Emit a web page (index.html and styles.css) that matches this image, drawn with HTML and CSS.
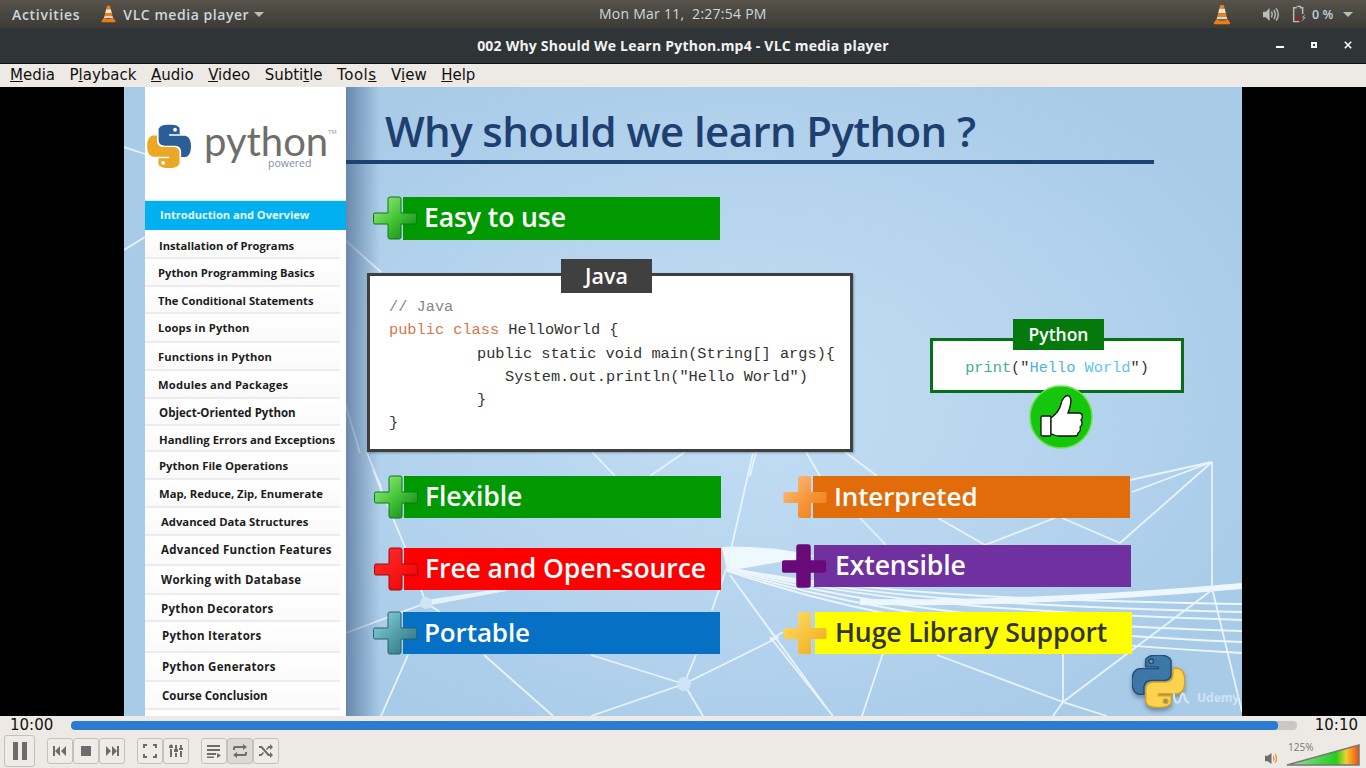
FILE: index.html
```html
<!DOCTYPE html>
<html lang="en">
<head>
	<meta charset="UTF-8">
	<title>002 Why Should We Learn Python.mp4 - VLC media player</title>
	<link rel="stylesheet" href="styles.css">
</head>
<body>
	<svg class="defs" width="0" height="0">
		<defs>
			<symbol id="py-blue" viewBox="0 0 111 111"><path d="M54.9 0C26.8 0 28.5 12.2 28.5 12.2l.03 12.6h26.8v3.8H17.9S0 26.6 0 54.9s15.6 27.3 15.6 27.3h9.3V69.1s-.5-15.6 15.4-15.6h26.5s14.9.2 14.9-14.4V14.9S84 0 54.9 0zm-14.7 8.5a4.8 4.8 0 1 1 0 9.6 4.8 4.8 0 0 1 0-9.6z"/></symbol>
			<symbol id="py-yellow" viewBox="0 0 111 111"><path d="M55.7 110c28.1 0 26.4-12.2 26.4-12.2l-.03-12.6H55.3v-3.8h37.4s17.9 2 17.9-26.3-15.6-27.3-15.6-27.3h-9.3v13.1s.5 15.6-15.4 15.6H43.8s-14.9-.2-14.9 14.4v24.2S26.6 110 55.7 110zm14.7-8.5a4.8 4.8 0 1 1 0-9.6 4.8 4.8 0 0 1 0 9.6z"/></symbol>
			<symbol id="plus" viewBox="0 0 44 44"><path d="M17 1h9a2 2 0 0 1 2 2v14h14a1.500 1.500 0 0 1 1.500 1.500v8a1.500 1.500 0 0 1-1.500 1.500H28v13a2 2 0 0 1-2 2h-9a2 2 0 0 1-2-2V28H2a1.500 1.500 0 0 1-1.500-1.500v-8A1.500 1.500 0 0 1 2 17h13V3a2 2 0 0 1 2-2z"/></symbol>
			<symbol id="cone" viewBox="0 0 20 24"><path fill="#f07f10" d="M8 1h4l1.200 4.500H6.800z"/><path fill="#e8e4dc" d="M6.800 5.500h6.400l1.200 5H5.600z"/><path fill="#f07f10" d="M5.600 10.500h8.800l1 4H4.600z"/><path fill="#d9d4ca" d="M4.600 14.500h10.800l.8 3H3.800z"/><path fill="#ef7d0e" d="M3.800 17l-3 4.200c-.5 1 0 1.800 1 1.800h16.400c1 0 1.500-.8 1-1.800l-3-4.200c-2 2.500-10.400 2.500-12.400 0z"/></symbol>
			<linearGradient id="g-green" x1="0" y1="0" x2="1" y2="1"><stop offset="0" stop-color="#a6f08e"/><stop offset=".5" stop-color="#45c437"/><stop offset="1" stop-color="#0a7f14"/></linearGradient>
			<linearGradient id="g-red" x1="0" y1="0" x2="1" y2="1"><stop offset="0" stop-color="#ff3030"/><stop offset="1" stop-color="#f00000"/></linearGradient>
			<linearGradient id="g-teal" x1="0" y1="0" x2="1" y2="1"><stop offset="0" stop-color="#90dbe0"/><stop offset=".5" stop-color="#55a0ac"/><stop offset="1" stop-color="#2c6a78"/></linearGradient>
			<linearGradient id="g-orange" x1="0" y1="0" x2="1" y2="1"><stop offset="0" stop-color="#fcc48a"/><stop offset=".55" stop-color="#f7953a"/><stop offset="1" stop-color="#e97c10"/></linearGradient>
			<linearGradient id="g-gold" x1="0" y1="0" x2="1" y2="1"><stop offset="0" stop-color="#ffe070"/><stop offset="1" stop-color="#f2a810"/></linearGradient>
			<linearGradient id="g-meter" x1="0" y1="0" x2="1" y2="0"><stop offset="0" stop-color="#a8dca0"/><stop offset=".68" stop-color="#1fcf1f"/><stop offset=".82" stop-color="#f0d030"/><stop offset="1" stop-color="#f44a10"/></linearGradient>
		</defs>
	</svg>

	<header class="topbar">
		<div class="topbar-left">
			<span class="activities">Activities</span>
			<span class="app-menu">
				<svg class="cone-small"><use href="#cone"/></svg>
				VLC media player
				<i class="caret"></i>
			</span>
		</div>
		<div class="clock">Mon Mar 11,&nbsp; 2:27:54 PM</div>
		<div class="tray">
			<svg class="cone-tray"><use href="#cone"/></svg>
			<svg class="tray-sound" viewBox="0 0 18 16"><path fill="#bdbdb8" d="M1 5h3l4-4v14l-4-4H1z"/><path fill="none" stroke="#bdbdb8" stroke-width="1.500" d="M10 5c1 2 1 4 0 6M12.500 3c2 3 2 7 0 10M15 1.500c2.800 4 2.800 9 0 13"/></svg>
			<svg class="tray-battery" viewBox="0 0 16 20"><path fill="none" stroke="#bdbdb8" stroke-width="1.600" d="M5 1.500h4v1.500h2.500v7M8 18.500H1.500V3H5"/><rect x="3.500" y="14" width="4" height="2.500" fill="#d01010"/><path fill="#bdbdb8" d="M14.500 10l-4 4h2.500l-3 5 5-5.500h-2.500z"/></svg>
			<span class="tray-percent">0 %</span>
			<i class="caret tray-caret"></i>
		</div>
	</header>

	<div class="titlebar">
		<span class="title-text">002 Why Should We Learn Python.mp4 - VLC media player</span>
		<div class="win-buttons">
			<i class="win-min"></i>
			<i class="win-max"></i>
			<svg class="win-close" viewBox="0 0 10 10"><path stroke="#fff" stroke-width="2" d="M1 1l8 8M9 1l-8 8"/></svg>
		</div>
	</div>

	<nav class="menubar">
		<span><u>M</u>edia</span>
		<span>P<u>l</u>ayback</span>
		<span><u>A</u>udio</span>
		<span><u>V</u>ideo</span>
		<span>Subti<u>t</u>le</span>
		<span>Tool<u>s</u></span>
		<span>V<u>i</u>ew</span>
		<span><u>H</u>elp</span>
	</nav>

	<main class="video">
		<div class="slide">
			<svg class="net" viewBox="124 87 1118 629">
				<path class="net-fan" d="M722 547C760 546 790 550 815 556L727 571Z"/>
				<path class="net-band" d="M860 602C1000 604 1130 596 1242 586"/>
				<g class="net-lines">
					<path d="M1212 462L1130 480M1212 462L1132 492M1212 462L1120 543M1212 462V588L1242 712M1212 590L1063 702L1053 716M1063 653V702L1107 716M937 655L1063 702M883 653L862 716M770 637L833 716M783 632L770 640"/>
					<path d="M124 147L145 154M124 250L145 237M345 240L381 272M345 403L360 453M367 453L381 487M592 452L615 476M685 452L650 476M756 452L750 476M806 452L820 476M845 452L877 476"/>
					<path d="M373 470L405 547L426 603M346 633L426 603M408 655L381 716M484 655L553 716M591 655L684 684M696 655L684 684M684 684L779 637M684 684L591 716M684 684L703 716"/>
					<path d="M753 453L727 567L712 610M741 590L826 707M730 575L777 640M860 518L886 545M938 518L985 545M1055 518L985 545M1062 518L1120 543M885 545L835 560M426 603L440 612"/>
				</g>
				<path class="net-wedge" d="M426 600L506 588L506 591L426 606Z"/>
				<circle class="net-node" cx="426" cy="603" r="6"/>
				<circle class="net-node" cx="684" cy="684" r="7"/>
				<g class="net-waves">
					<path d="M727 568C860 592 1000 600 1242 604"/>
					<path d="M727 568C860 596 1000 606 1242 612"/>
					<path d="M727 568C860 600 1000 612 1242 620"/>
					<path d="M727 569C860 604 1000 624 1242 631"/>
					<path d="M727 570C860 610 1000 632 1242 642"/>
					<path d="M727 571C860 616 1000 640 1242 653"/>
				</g>
			</svg>

			<aside class="sidebar">
				<div class="brand">
					<svg class="brand-logo" viewBox="0 0 111 111">
						<use href="#py-blue" class="brand-blue"/>
						<use href="#py-yellow" class="brand-yellow"/>
					</svg>
					<span class="brand-word">python</span>
					<span class="brand-powered">powered</span>
					<span class="brand-tm">TM</span>
				</div>
				<div class="side-active">Introduction and Overview</div>
				<ul class="side-list">
					<li>Installation of Programs</li>
					<li>Python Programming Basics</li>
					<li>The Conditional Statements</li>
					<li>Loops in Python</li>
					<li>Functions in Python</li>
					<li>Modules and Packages</li>
					<li>Object-Oriented Python</li>
					<li>Handling Errors and Exceptions</li>
					<li>Python File Operations</li>
					<li>Map, Reduce, Zip, Enumerate</li>
					<li>Advanced Data Structures</li>
					<li>Advanced Function Features</li>
					<li>Working with Database</li>
					<li>Python Decorators</li>
					<li>Python Iterators</li>
					<li>Python Generators</li>
					<li>Course Conclusion</li>
				</ul>
			</aside>

			<section class="canvas">
				<h1 class="slide-title">Why should we learn Python ?</h1>
				<div class="title-rule"></div>

				<div class="feature f-easy"><svg class="plus p-green"><use href="#plus"/></svg>Easy to use</div>
				<div class="feature f-flexible"><svg class="plus p-green"><use href="#plus"/></svg>Flexible</div>
				<div class="feature f-free"><svg class="plus p-red"><use href="#plus"/></svg>Free and Open-source</div>
				<div class="feature f-portable"><svg class="plus p-teal"><use href="#plus"/></svg>Portable</div>
				<div class="feature f-interpreted"><svg class="plus p-orange"><use href="#plus"/></svg>Interpreted</div>
				<div class="feature f-extensible"><svg class="plus p-purple"><use href="#plus"/></svg>Extensible</div>
				<div class="feature f-huge"><svg class="plus p-gold"><use href="#plus"/></svg>Huge Library Support</div>

				<div class="java-box">
					<span class="java-tag">Java</span>
					<div class="code">
						<div class="c-comment">// Java</div>
						<div><span class="c-key">public class</span> HelloWorld {</div>
						<div class="indent-1">public static void main(String[] args){</div>
						<div class="indent-2">System.out.println("Hello World")</div>
						<div class="indent-1">}</div>
						<div>}</div>
					</div>
				</div>

				<div class="py-box">
					<span class="py-tag">Python</span>
					<div class="py-code"><span class="c-fn">print</span>("<span class="c-str">Hello</span> <span class="c-str2">World</span>")</div>
				</div>

				<svg class="thumb" viewBox="0 0 64 64">
					<circle cx="32" cy="32" r="31" fill="#16c60c" stroke="#6fe04f" stroke-width="1.500"/>
					<rect x="12" y="31" width="10" height="20" rx="1.500" fill="#fff" stroke="#111" stroke-width="1.300"/>
					<path fill="#fff" stroke="#111" stroke-width="1.300" d="M22 33C27 29 31 24 32 19C33 14 37 9 40 11C43 13 42 20 39 28L50 28C54 28 54 33 52 35C54 37 53 41 51 42C52 44 51 47 49 48C49 50 48 51 46 51L30 51C26 51 24 49 22 49Z"/>
				</svg>

				<svg class="corner-logo" viewBox="0 0 111 111">
					<use href="#py-blue" class="corner-blue"/>
					<use href="#py-yellow" class="corner-yellow"/>
				</svg>
				<svg class="udemy-mark" viewBox="0 0 22 14"><path d="M2 2c0 6 1 10 4 10s3-4 4-7 2-4 3-2 0 9 6 9"/></svg>
				<span class="udemy">Udemy</span>
			</section>
		</div>
	</main>

	<footer class="controls">
		<div class="seek-row">
			<span class="time">10:00</span>
			<div class="seek"><div class="seek-fill"></div></div>
			<span class="time">10:10</span>
		</div>
		<div class="button-row">
			<button class="ctl ctl-play"><svg viewBox="0 0 20 20"><path d="M3 1h5v18H3zM12 1h5v18h-5z"/></svg></button>
			<div class="ctl-group">
				<button class="ctl"><svg viewBox="0 0 16 16"><path d="M1 3h2v10H1zM8 3v10L3 8zM14 3v10L9 8z"/></svg></button>
				<button class="ctl"><svg viewBox="0 0 16 16"><path d="M3 3h10v10H3z"/></svg></button>
				<button class="ctl"><svg viewBox="0 0 16 16"><path d="M2 3l5 5-5 5zM8 3l5 5-5 5zM13 3h2v10h-2z"/></svg></button>
			</div>
			<div class="ctl-group">
				<button class="ctl"><svg viewBox="0 0 16 16"><path d="M1 1h4v2H3v2H1zM11 1h4v4h-2V3h-2zM1 11h2v2h2v2H1zM13 11h2v4h-4v-2h2z"/></svg></button>
				<button class="ctl"><svg viewBox="0 0 16 16"><path d="M2 6h2v8H2zM1 3l2-2 2 2v2H1zM7 10h2v4H7zM7 2h2v4H7zM6 6h4v3H6zM12 8h2v6h-2zM12 2h2v3h-2zM11 5h4v2h-4z"/></svg></button>
			</div>
			<div class="ctl-group">
				<button class="ctl"><svg viewBox="0 0 16 16"><path d="M1 2h13v2H1zM1 6h13v2H1zM1 10h9v2H1zM1 13.500h7v1.500H1zM11 10l4 2.500-4 2.500z"/></svg></button>
				<button class="ctl ctl-on"><svg viewBox="0 0 16 16"><path d="M1 7V5a2 2 0 0 1 2-2h8V1l4 3-4 3V5H3v2zM15 9v2a2 2 0 0 1-2 2H5v2l-4-3 4-3v2h8V9z"/></svg></button>
				<button class="ctl"><svg viewBox="0 0 16 16"><path d="M1 3h3l7 8h1V9l3 3-3 3v-2h-2L3 5H1zM12 1l3 3-3 3V5h-1l-2 2-1-1 2.500-3H12zM1 11h2l2-2 1 1-2.500 3H1z"/></svg></button>
			</div>
			<div class="volume">
				<svg class="vol-icon" viewBox="0 0 16 14"><path fill="#6d6d6d" d="M1 4h3l4-3v12l-4-3H1z"/><path fill="none" stroke="#ef8a1e" stroke-width="1.300" d="M10 4.500c.8 1.500.8 3.500 0 5M12 2.500c1.700 2.800 1.700 6.200 0 9"/></svg>
				<div class="vol-meter">
					<span class="vol-label">125%</span>
					<svg class="vol-shape" viewBox="0 0 74 22"><path fill="url(#g-meter)" stroke="#777" stroke-width="1.500" d="M1 21L73 1v20z"/></svg>
				</div>
			</div>
		</div>
	</footer>
</body>
</html>
```
FILE: styles.css
```css
*{box-sizing:border-box;}
html,body{margin:0;padding:0;height:100%;overflow:hidden;}
body{display:flex;flex-direction:column;width:1366px;height:768px;font-family:"Open Sans","DejaVu Sans",sans-serif;background:#000;}
ul{list-style:none;padding:0;margin:0;}
.defs{position:absolute;}

/* gnome bar */
.topbar{display:flex;align-items:center;justify-content:space-between;position:relative;height:28px;padding:0 12px;background:linear-gradient(#57534b,#3c3b37);color:#cfd6da;font-size:14px;font-weight:600;}
.topbar-left{display:flex;align-items:center;gap:21px;}
.activities{letter-spacing:.7px;}
.app-menu{display:flex;align-items:center;gap:7px;letter-spacing:.55px;}
.cone-small{width:15px;height:18px;}
.caret{display:inline-block;width:0;height:0;border-left:5px solid transparent;border-right:5px solid transparent;border-top:5px solid #bdbdb8;margin-left:-2px;}
.clock{position:absolute;left:599px;top:4px;font-weight:500;letter-spacing:.25px;}
.tray{display:flex;align-items:center;margin-right:1px;}
.cone-tray{width:18px;height:21px;margin-right:31px;}
.tray-sound{width:17px;height:15px;margin-right:13px;}
.tray-battery{width:15px;height:18px;margin-right:5px;}
.tray-percent{color:#bcd0de;width:27px;font-size:12.500px;}
.tray-caret{margin:0 0 0 4px;}

.titlebar{display:flex;align-items:center;justify-content:center;position:relative;height:36px;background:#2f3437;border-bottom:1px solid #111;color:#f2f2f2;font-size:14px;font-weight:700;}
.title-text{letter-spacing:.22px;}
.win-buttons{position:absolute;right:0;top:0;width:120px;height:35px;}
.win-min{position:absolute;left:30px;top:18px;width:8px;height:2px;background:#fff;}
.win-max{position:absolute;left:65px;top:14px;width:6px;height:6px;background:#2f3437;border:2px solid #fff;}
.win-close{position:absolute;left:98px;top:13px;width:8px;height:8px;}

.menubar{display:flex;gap:14.500px;height:23px;padding:0 10px;background:#edeae5;font-family:"DejaVu Sans",sans-serif;font-size:15px;line-height:23px;color:#111;}
.menubar span:nth-child(6){letter-spacing:.5px;}

/* video area */
.video{flex:1;display:flex;justify-content:center;min-height:0;background:#000;}
.slide{display:flex;position:relative;width:1118px;height:629px;padding-left:21px;overflow:hidden;background:radial-gradient(ellipse 560px 380px at 56% 50%,#c2def5 0%,#b6d4ee 55%,#a8cbe8 100%);}
.net{position:absolute;left:0;top:0;width:1118px;height:629px;}
.net-lines path{fill:none;stroke:#e8f3fb;stroke-width:1.800;}
.net-waves path{fill:none;stroke:#eef6fc;stroke-width:1.800;}
.net-fan{fill:#eef8ff;}
.net-band{fill:none;stroke:#eef7fd;stroke-width:6;}
.net-wedge{fill:#e4f2fc;}
.net-node{fill:#cfe4f6;}

.sidebar{position:relative;display:flex;flex-direction:column;width:201px;height:629px;background:#fff;flex-shrink:0;}
.brand{position:relative;display:flex;align-items:flex-start;height:113px;}
.brand-logo{width:44px;height:49px;margin:35px 0 0 2px;transform:scaleX(-1);}
.brand-blue{fill:#2b5d97;}
.brand-yellow{fill:#eaa824;}
.brand-word{margin:37px 0 0 13px;font-family:"Lato",sans-serif;font-weight:400;font-size:40px;line-height:34px;color:#6e6e6b;}
.brand-powered{position:absolute;left:123px;top:71px;font-size:10.500px;line-height:10px;color:#7f8ea6;font-weight:400;}
.brand-tm{position:absolute;left:183px;top:41px;font-size:6px;line-height:8px;color:#999;}
.side-active{height:30px;padding-left:15px;background:#00b0f0;border-top:1px solid #dfe8ef;color:#eafaff;font-size:11.100px;font-weight:700;line-height:28px;}
.side-list{padding-top:2px;}
.side-list li{height:28px;margin-right:6px;padding-left:13px;border-bottom:2px solid #ececec;background:linear-gradient(#fff,#fafafa);font-size:11.200px;font-weight:700;line-height:27px;color:#1c1c1c;white-space:nowrap;}
.side-list li:nth-child(1){height:27px;padding-left:14px;}
.side-list li:nth-child(3){height:27px;}
.side-list li:nth-child(4){height:29px;letter-spacing:.15px;}
.side-list li:nth-child(5){letter-spacing:.15px;}
.side-list li:nth-child(6){letter-spacing:.2px;}
.side-list li:nth-child(7){height:27px;padding-left:14px;font-size:11.500px;}
.side-list li:nth-child(8){height:26px;padding-left:14px;font-size:11.300px;}
.side-list li:nth-child(9){padding-left:14px;font-size:11.300px;}
.side-list li:nth-child(10){padding-left:14px;font-size:11.300px;}
.side-list li:nth-child(n+11){padding-left:16px;}
.side-list li:nth-child(11){font-size:11.300px;}
.side-list li:nth-child(n+12){font-size:11.500px;letter-spacing:.3px;}
.side-list li:nth-child(12){height:30px;}
.side-list li:nth-child(13){height:29px;}
.side-list li:nth-child(14){height:27px;}
.side-list li:nth-child(15){height:31px;padding-left:17px;}
.side-list li:nth-child(16){height:29px;padding-left:17px;}
.side-list li:nth-child(17){padding-left:17px;letter-spacing:0;}

.canvas{position:relative;flex:1;}
.canvas::before{content:"";position:absolute;left:0;top:0;bottom:0;width:34px;background:linear-gradient(90deg,rgba(50,80,120,.55),rgba(60,100,150,0));}
.slide-title{position:absolute;left:39px;top:14px;margin:0;font-size:42px;font-weight:600;letter-spacing:-.6px;line-height:60px;color:#1e3f6f;white-space:nowrap;}
.title-rule{position:absolute;left:0;top:73px;width:808px;height:4px;background:#1c4270;}

.feature{position:absolute;width:317px;height:42px;padding-left:21px;font-size:26.600px;font-weight:600;letter-spacing:-.12px;line-height:41px;color:#fff;white-space:nowrap;}
.plus{position:absolute;left:-30px;top:-1px;width:44px;height:44px;}
.f-easy{left:57px;top:110px;height:43px;background:#009900;}
.f-flexible{left:58px;top:389px;background:#009900;}
.f-free{left:58px;top:461px;background:#ff0000;}
.f-portable{left:57px;top:525px;background:#0570c4;font-size:26px;}
.f-interpreted{left:467px;top:389px;background:#e36c0a;font-size:26px;}
.f-extensible{left:468px;top:458px;background:#7030a0;}
.f-huge{left:469px;top:525px;padding-left:20px;background:#ffff00;color:#333;}
.p-green{fill:url(#g-green);stroke:#0a7a14;}
.p-red{fill:url(#g-red);stroke:#a00808;}
.p-teal{fill:url(#g-teal);stroke:#2a6070;}
.p-orange{fill:url(#g-orange);}
.p-purple{left:-32px;fill:#6a0a78;stroke:#6a0a78;stroke-width:1.500;stroke-linejoin:round;}
.p-gold{left:-32px;fill:url(#g-gold);}

.java-box{position:absolute;left:21px;top:186px;width:486px;height:179px;background:#fff;border:3px solid #3f3f3f;box-shadow:1px 1px 2px rgba(0,0,0,.3);}
.java-tag{position:absolute;left:191px;top:-17px;width:91px;height:34px;background:#404040;color:#fff;font-size:21.500px;font-weight:600;line-height:33px;text-align:center;}
.code{margin:20px 0 0 19px;font-family:"Liberation Mono",monospace;font-size:15.300px;line-height:23.250px;color:#333;}
.indent-1{padding-left:88px;}
.indent-2{padding-left:116px;}
.c-comment{color:#888;}
.c-key{color:#d2784a;}

.py-box{position:absolute;left:584px;top:251px;width:254px;height:55px;background:#fff;border:3px solid #067018;}
.py-tag{position:absolute;left:80px;top:-22px;width:91px;height:31px;background:#047a0c;color:#fff;font-size:17.500px;font-weight:600;line-height:31px;text-align:center;}
.py-code{margin-top:17px;font-family:"Liberation Mono",monospace;font-size:15.300px;line-height:20px;text-align:center;color:#333;}
.c-fn{color:#3cb08f;}
.c-str{color:#4fb4de;}
.c-str2{color:#62c4ee;}

.thumb{position:absolute;left:683px;top:298px;width:64px;height:64px;}
.corner-logo{position:absolute;left:786px;top:568px;width:53px;height:53px;filter:drop-shadow(0 3px 2px rgba(40,60,80,.45));}
.corner-blue{fill:#3d77a8;stroke:#1f4f7a;stroke-width:3;}
.corner-yellow{fill:#fcd34e;stroke:#d8a020;stroke-width:3;}
.udemy-mark{position:absolute;left:826px;top:604px;width:20px;height:14px;fill:none;stroke:#d4e6f4;stroke-width:2.500;}
.udemy{position:absolute;left:851px;top:603px;font-size:12px;line-height:16px;font-weight:700;color:#d0e3f2;}

/* player controls */
.controls{display:flex;flex-direction:column;height:52px;background:#edeae5;}
.seek-row{display:flex;align-items:center;height:18px;padding:0 8px 0 10px;}
.time{font-family:"DejaVu Sans",sans-serif;font-size:15px;color:#111;}
.seek{flex:1;height:9px;margin:0 18px;background:#cbc8c4;border-radius:4px;overflow:hidden;}
.seek-fill{width:98.450%;height:9px;background:#2b7bd0;border-radius:4px;}
.button-row{position:relative;display:flex;align-items:center;gap:12px;padding-left:4px;height:34px;}
.ctl{display:flex;align-items:center;justify-content:center;width:26px;height:26px;padding:0;background:#efece8;border:1px solid #c4c0ba;border-radius:3px;}
.ctl svg{width:16px;height:16px;fill:#6c6c6c;}
.ctl-play{width:31px;height:32px;}
.ctl-play svg{width:20px;height:20px;}
.ctl-on{background:#dcd8d3;}
.ctl-group{display:flex;}
.volume{position:absolute;right:6px;top:0;display:flex;align-items:flex-end;gap:7px;height:34px;}
.vol-icon{width:15px;height:13px;margin-bottom:3px;}
.vol-meter{position:relative;width:74px;height:24px;}
.vol-label{position:absolute;left:2px;top:-4px;font-size:10px;color:#777;}
.vol-shape{position:absolute;left:0;bottom:2px;width:74px;height:22px;}
```
